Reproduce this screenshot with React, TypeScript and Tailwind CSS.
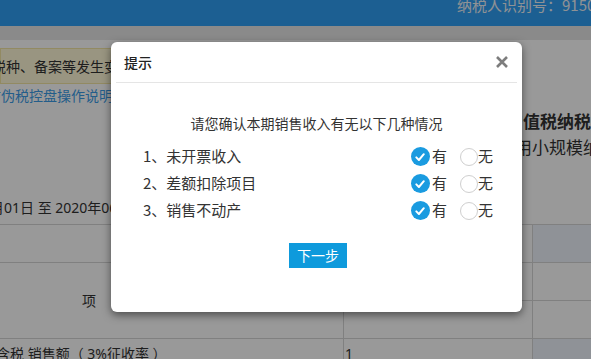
const cjk = "font-['Noto_Sans_CJK_SC','Noto_Sans',sans-serif]";
const latinFirst = "font-['Noto_Sans','Noto_Sans_CJK_SC',sans-serif]";

function CheckedDot() {
  return (
    <span className="flex h-[19px] w-[19px] items-center justify-center rounded-full bg-[#1a9be0]">
      <svg width="12" height="12" viewBox="0 0 12 12">
        <path d="M2.3 6.4 L4.9 9 L9.8 3.2" fill="none" stroke="#fff" strokeWidth="2" strokeLinecap="round" strokeLinejoin="round" />
      </svg>
    </span>
  );
}

function EmptyDot() {
  return <span className="block h-[18px] w-[18px] rounded-full border border-[#cfcfcf] bg-white" />;
}

export default function App() {
  const items = ['1、未开票收入', '2、差额扣除项目', '3、销售不动产'];

  return (
    <div className={`relative h-[359px] w-[591px] overflow-hidden bg-white text-[#333] ${cjk}`}>
      {/* page under the mask */}
      <div className="flex h-[26px] items-start bg-[#2f9ef3] pl-[457px]">
        <span className="-mt-[5px] whitespace-nowrap text-[15px] leading-[20px] text-[#eef3f8]">纳税人识别号：91500000</span>
      </div>
      <div className="h-[14px] bg-[#e6e6e6]" />

      <div className="pt-[8px]">
        <div className="h-[36px] w-[420px] border border-[#f3e6a4] bg-[#fff9d8]">
          <p className="-ml-[9px] whitespace-nowrap text-[14px] leading-[34px]">税种、备案等发生变更的，请及时办理</p>
        </div>
        <p className="-ml-[13px] whitespace-nowrap text-[14px] leading-[22px] text-[#3b9ce6]">防伪税控盘操作说明</p>

        <div className="mt-[2px] whitespace-nowrap">
          <p className="pl-[506px] text-[17px] font-bold leading-[26px]">增值税纳税申报表</p>
          <p className="pl-[498px] text-[17px] leading-[26px]">适用小规模纳税人）</p>
        </div>

        <p className={`mt-[37px] -ml-[10px] whitespace-nowrap text-[14px] leading-[22px] ${latinFirst}`}>月01日 至 2020年06月30日</p>

        <div className={`mt-[5px] grid grid-cols-[344px_189px_1fr] grid-rows-[38px_38px_38px_38px] border-t border-[#d5d5d5] text-[14px] ${latinFirst}`}>
          <div className="border-b border-r border-[#d5d5d5]" />
          <div className="border-b border-r border-[#d5d5d5]" />
          <div className="border-b border-[#d5d5d5] bg-[#eff4fc]" />

          <div className="row-span-2 flex items-center border-b border-r border-[#d5d5d5] pl-[82px]">项</div>
          <div className="border-b border-r border-[#d5d5d5]" />
          <div className="border-b border-[#d5d5d5]" />
          <div className="border-b border-r border-[#d5d5d5]" />
          <div className="border-b border-[#d5d5d5]" />

          <div className="border-r border-[#d5d5d5] pt-[5px]">
            <p className="-ml-[18px] whitespace-nowrap leading-[20px]">不含税 销售额（ 3%征收率 ）</p>
          </div>
          <div className="border-r border-[#d5d5d5] pl-[1px] pt-[5px] leading-[20px]">1</div>
          <div className="bg-[#eff4fc]" />
        </div>
      </div>

      {/* mask + dialog */}
      <div className="absolute inset-0 bg-black/40">
        <div className="ml-[111px] mt-[42px] h-[270px] w-[411px] rounded-[6px] bg-white shadow-[0_3px_9px_rgba(0,0,0,0.5)]">
          <div className="flex h-[40px] items-center justify-between pl-[13px] pr-[14px]">
            <span className="text-[14px] font-medium text-[#222]">提示</span>
            <svg width="12" height="12" viewBox="0 0 12 12">
              <path d="M1 1 L11 11 M11 1 L1 11" stroke="#7d7d7d" strokeWidth="2.6" />
            </svg>
          </div>
          <div className="mx-[5px] h-px bg-[#e5e5e5]" />

          <p className="pt-[30px] text-center text-[14px] leading-[20px] text-[#333]">请您确认本期销售收入有无以下几种情况</p>

          <div className="mt-[10px] pl-[32px] pr-[29px]">
            {items.map((t) => (
              <div key={t} className="flex h-[27px] items-center justify-between text-[15px]">
                <span className="text-[#333]">{t}</span>
                <div className="flex items-center">
                  <CheckedDot />
                  <span className="ml-[2px] text-[#333]">有</span>
                  <span className="ml-[13px]">
                    <EmptyDot />
                  </span>
                  <span className="text-[#333]">无</span>
                </div>
              </div>
            ))}
          </div>

          <div className="mt-[19px] flex justify-center pl-[3px]">
            <button className="h-[25px] w-[58px] bg-[#0e9adc] text-[14px] leading-[25px] text-white">下一步</button>
          </div>
        </div>
      </div>
    </div>
  );
}
